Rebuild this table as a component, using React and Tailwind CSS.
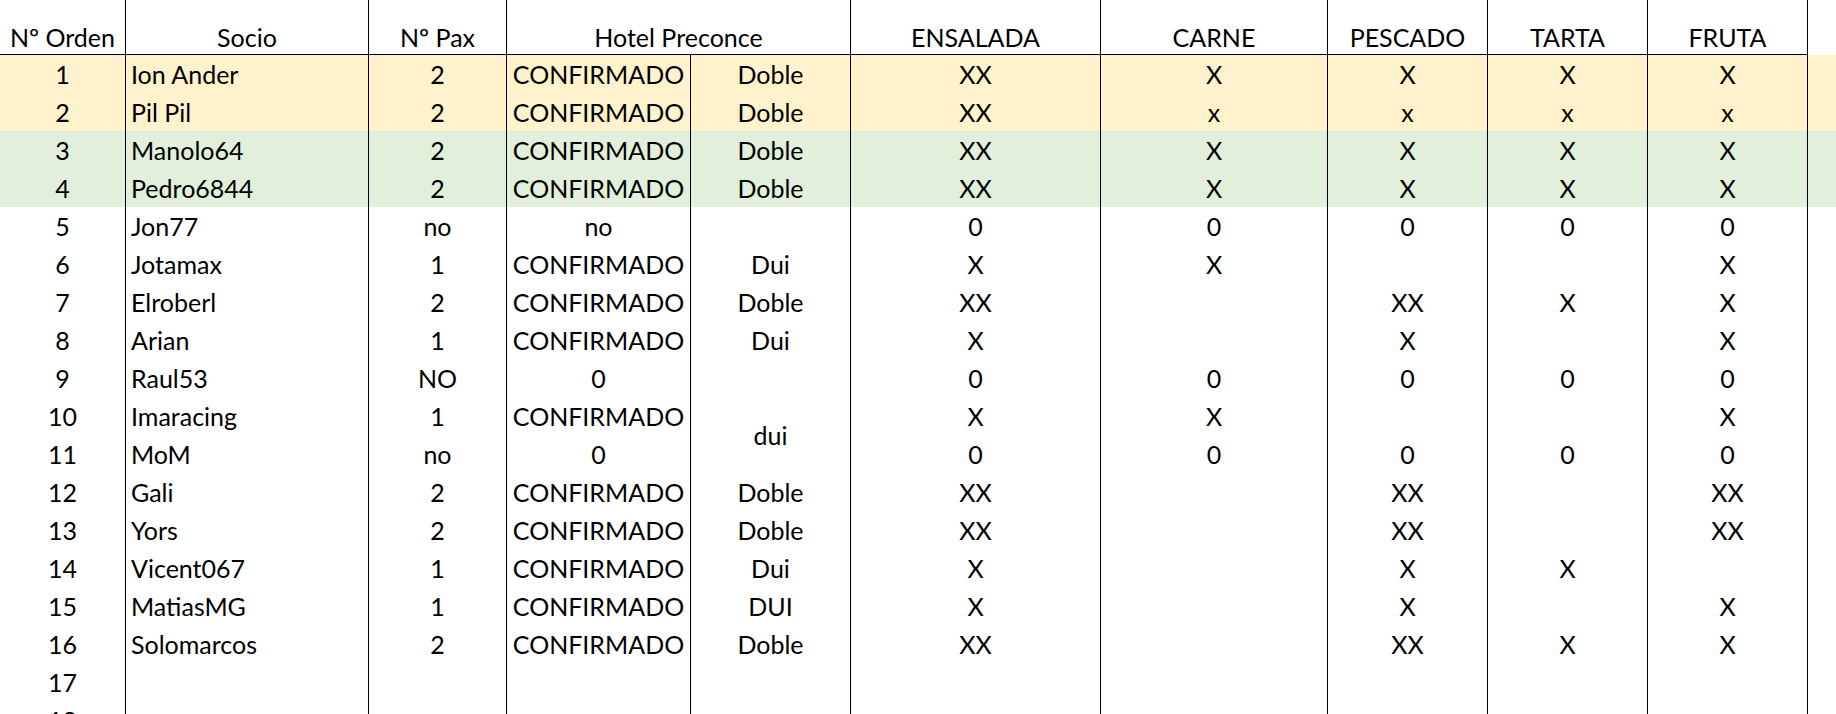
import React from "react";

// ── Datos de la hoja ───────────────────────────────────────────
const ROWS = [
  { n: 1, socio: "Ion Ander", pax: "2", hotel: "CONFIRMADO", hab: "Doble", menu: ["XX", "X", "X", "X", "X"], band: "orange" },
  { n: 2, socio: "Pil Pil", pax: "2", hotel: "CONFIRMADO", hab: "Doble", menu: ["XX", "x", "x", "x", "x"], band: "orange" },
  { n: 3, socio: "Manolo64", pax: "2", hotel: "CONFIRMADO", hab: "Doble", menu: ["XX", "X", "X", "X", "X"], band: "green" },
  { n: 4, socio: "Pedro6844", pax: "2", hotel: "CONFIRMADO", hab: "Doble", menu: ["XX", "X", "X", "X", "X"], band: "green" },
  { n: 5, socio: "Jon77", pax: "no", hotel: "no", hab: "", menu: ["0", "0", "0", "0", "0"] },
  { n: 6, socio: "Jotamax", pax: "1", hotel: "CONFIRMADO", hab: "Dui", menu: ["X", "X", "", "", "X"] },
  { n: 7, socio: "Elroberl", pax: "2", hotel: "CONFIRMADO", hab: "Doble", menu: ["XX", "", "XX", "X", "X"] },
  { n: 8, socio: "Arian", pax: "1", hotel: "CONFIRMADO", hab: "Dui", menu: ["X", "", "X", "", "X"] },
  { n: 9, socio: "Raul53", pax: "NO", hotel: "0", hab: "", menu: ["0", "0", "0", "0", "0"] },
  { n: 10, socio: "Imaracing", pax: "1", hotel: "CONFIRMADO", hab: "dui", merged: true, menu: ["X", "X", "", "", "X"] },
  { n: 11, socio: "MoM", pax: "no", hotel: "0", hab: null, menu: ["0", "0", "0", "0", "0"] },
  { n: 12, socio: "Gali", pax: "2", hotel: "CONFIRMADO", hab: "Doble", menu: ["XX", "", "XX", "", "XX"] },
  { n: 13, socio: "Yors", pax: "2", hotel: "CONFIRMADO", hab: "Doble", menu: ["XX", "", "XX", "", "XX"] },
  { n: 14, socio: "Vicent067", pax: "1", hotel: "CONFIRMADO", hab: "Dui", menu: ["X", "", "X", "X", ""] },
  { n: 15, socio: "MatiasMG", pax: "1", hotel: "CONFIRMADO", hab: "DUI", menu: ["X", "", "X", "", "X"] },
  { n: 16, socio: "Solomarcos", pax: "2", hotel: "CONFIRMADO", hab: "Doble", menu: ["XX", "", "XX", "X", "X"] },
  { n: 17, socio: "", pax: "", hotel: "", hab: "", menu: ["", "", "", "", ""] },
  { n: 18, socio: "", pax: "", hotel: "", hab: "", menu: ["", "", "", "", ""] },
];

const MENU = ["ENSALADA", "CARNE", "PESCADO", "TARTA", "FRUTA"];

const BAND = {
  orange: "bg-[#fff2cc]",
  green: "bg-[#e2efda]",
};

// celda normal: texto abajo, como Excel
function Cell({ children, bg = "", left = false, border = true, extra = "pb-[6px]" }) {
  return (
    <div
      className={`flex items-end ${left ? "justify-start pl-[5px]" : "justify-center"} ${
        border ? "border-r border-black" : ""
      } ${bg} ${extra}`}
    >
      <span className="leading-none whitespace-nowrap">{children}</span>
    </div>
  );
}

export default function App() {
  return (
    <div
      className="h-screen overflow-hidden bg-white text-black text-[25px]"
      style={{ fontFamily: "Lato, 'Open Sans', sans-serif" }}
    >
      <div className="grid grid-cols-[126px_243px_138px_184px_160px_250px_227px_160px_160px_160px_1fr] grid-rows-[55px] auto-rows-[38px]">
        {/* ── Cabecera ── */}
        <Cell extra="border-b pb-[4px]">Nº Orden</Cell>
        <Cell extra="border-b pb-[4px]">Socio</Cell>
        <Cell extra="border-b pb-[4px]">Nº Pax</Cell>
        <Cell extra="col-span-2 border-b pb-[4px]">Hotel Preconce</Cell>
        {MENU.map((m) => (
          <Cell key={m} extra="border-b pb-[4px]">
            {m}
          </Cell>
        ))}
        <div />

        {/* ── Filas ── */}
        {ROWS.map((r) => {
          const bg = r.band ? BAND[r.band] : "";
          return (
            <React.Fragment key={r.n}>
              <Cell bg={bg}>{r.n}</Cell>
              <Cell bg={bg} left>
                {r.socio}
              </Cell>
              <Cell bg={bg}>{r.pax}</Cell>
              <Cell bg={bg}>{r.hotel}</Cell>
              {r.hab !== null &&
                (r.merged ? (
                  <div className="row-span-2 flex items-center justify-center border-r border-black">
                    <span className="leading-none">{r.hab}</span>
                  </div>
                ) : (
                  <Cell bg={bg}>{r.hab}</Cell>
                ))}
              {r.menu.map((v, i) => (
                <Cell key={i} bg={bg}>
                  {v}
                </Cell>
              ))}
              <div className={bg} />
            </React.Fragment>
          );
        })}
      </div>
    </div>
  );
}
